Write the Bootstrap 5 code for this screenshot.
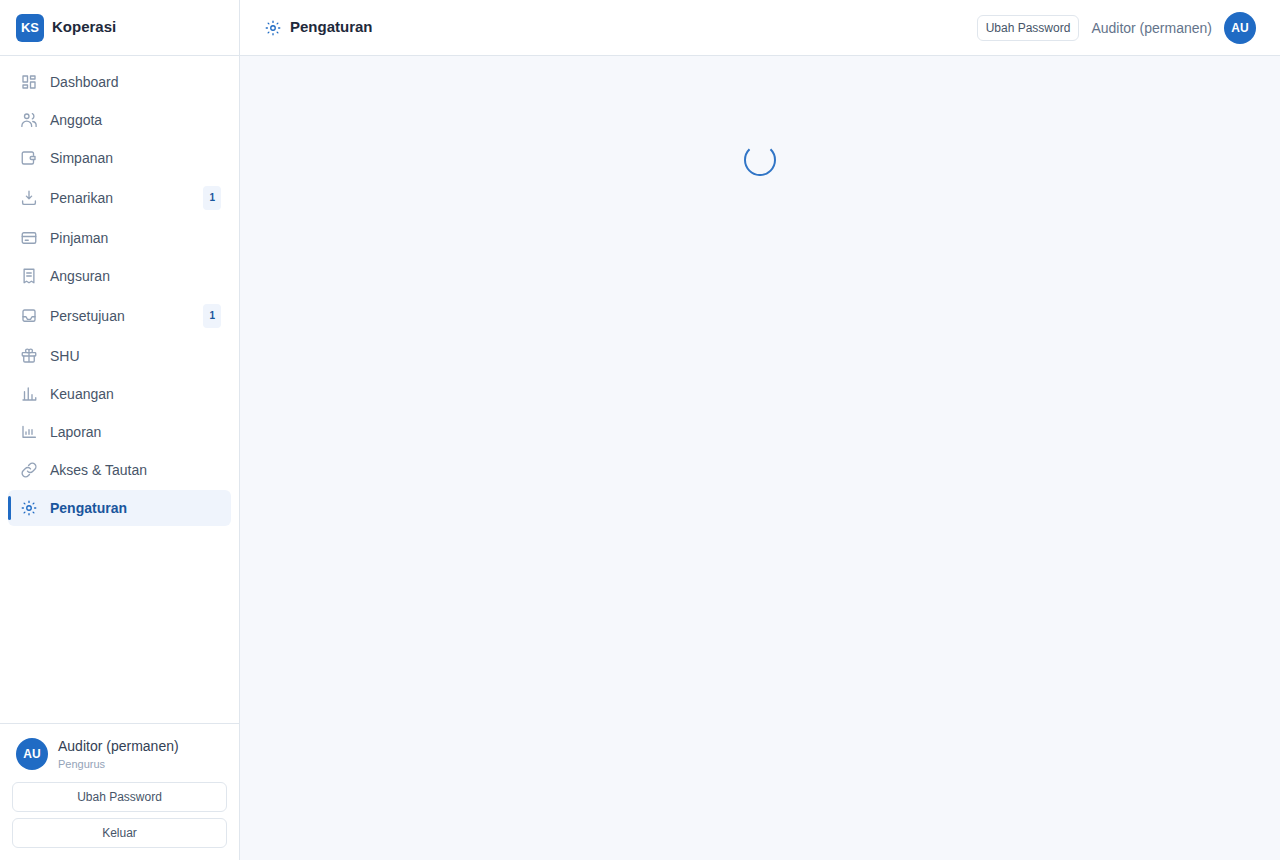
<!DOCTYPE html>
<html lang="id">
<head>
<meta charset="utf-8">
<meta name="viewport" content="width=device-width, initial-scale=1">
<title>Pengaturan - Koperasi</title>
<link href="https://cdn.jsdelivr.net/npm/bootstrap@5.3.0/dist/css/bootstrap.min.css" rel="stylesheet">
<style>
:root { --brand: #206bc4; --brand-dark: #1a569d; --line: #e0e6ed; --tint: #eff4fc; }
body { font-family: "Liberation Sans", Arial, sans-serif; font-size: 14px; line-height: 20px; color: #1f2937; background: #f6f8fc; }
.sidebar { width: 240px; border-right: 1px solid var(--line); }
.topbar, .brand { height: 56px; border-bottom: 1px solid var(--line); }
.brand-title, .page-title { font-size: 15px; line-height: 20px; padding-bottom: 2px; font-weight: 700; color: #1e293b; }
.logo { width: 28px; height: 28px; border-radius: 6px; background: var(--brand); font-size: 13px; }
.avatar { width: 32px; height: 32px; background: var(--brand); font-size: 12px; }
.side-nav { gap: 2px; }
.side-nav .nav-link { gap: 10px; padding: 8px 10px; border-radius: 6px; color: #475569; }
.side-nav .nav-link:hover { background: #f6f8fc; }
.side-nav .nav-link.active { background: var(--tint); color: var(--brand-dark); font-weight: 700; }
.side-nav .nav-link.active::before { content: ""; position: absolute; left: 0; top: 6px; bottom: 6px; width: 3px; border-radius: 2px; background: var(--brand); }
.icon-box { width: 22px; color: #94a3b8; }
.active .icon-box, .page-icon { color: var(--brand); }
svg { width: 18px; height: 18px; fill: none; stroke: currentColor; stroke-width: 1.8; stroke-linecap: round; stroke-linejoin: round; }
.count { padding: 0 6px; border-radius: 4px; font-size: 10px; line-height: 24px; font-weight: 700; background: var(--tint); color: var(--brand-dark); }
.side-foot { border-top: 1px solid var(--line); padding: 12px; gap: 10px; }
.user-text { margin-left: 10px; }
.user-name { color: #334155; }
.user-role { font-size: 11px; line-height: 16px; color: #94a3b8; }
.foot-actions { gap: 6px; }
.top-actions { gap: 12px; }
.btn-line { --bs-btn-font-size: 12px; --bs-btn-line-height: 16px; --bs-btn-padding-y: 6px; --bs-btn-padding-x: 8px; --bs-btn-border-radius: 6px; --bs-btn-color: #475569; --bs-btn-bg: #fff; --bs-btn-border-color: #e0e6ed; --bs-btn-hover-bg: #f6f8fc; --bs-btn-hover-border-color: #cbd5e1; }
.topbar .btn-line { --bs-btn-padding-y: 4px; }
.account { color: #64748b; }
.loading { padding-top: 88px; }
.loading svg { width: 32px; height: 32px; color: #3175c6; }
</style>
</head>
<body>
<svg class="d-none" aria-hidden="true">
  <symbol id="gear" viewBox="0 0 24 24"><circle cx="12" cy="12" r="3"/><path d="M12 3v1.500M12 19.500V21M3 12h1.500M19.500 12H21M5.500 5.500l1 1M17.500 17.500l1 1M18.500 5.500l-1 1M6.500 17.500l-1 1"/></symbol>
</svg>
<div class="d-flex min-vh-100">
  <aside class="sidebar bg-white d-flex flex-column flex-shrink-0">
    <div class="brand d-flex align-items-center gap-2 px-3">
      <span class="logo d-flex align-items-center justify-content-center text-white fw-bold">KS</span>
      <span class="brand-title">Koperasi</span>
    </div>
    <nav class="side-nav nav flex-column flex-nowrap flex-grow-1 p-2" aria-label="Menu utama">
      <a class="nav-link d-flex align-items-center" href="#"><span class="icon-box d-flex justify-content-center"><svg viewBox="0 0 24 24"><path d="M4 4h6v8H4zM14 4h6v4h-6zM4 16h6v4H4zM14 12h6v8h-6z"/></svg></span>Dashboard</a>
      <a class="nav-link d-flex align-items-center" href="#"><span class="icon-box d-flex justify-content-center"><svg viewBox="0 0 24 24"><circle cx="9" cy="7" r="3"/><path d="M2.500 20.500v-.500a6.500 6.500 0 0 1 13 0v.500M16.500 3.500a4 4 0 0 1 0 7M17 14a5.500 5.500 0 0 1 4.500 6v.500"/></svg></span>Anggota</a>
      <a class="nav-link d-flex align-items-center" href="#"><span class="icon-box d-flex justify-content-center"><svg viewBox="0 0 24 24"><path d="M18 8V6a2 2 0 0 0-2-2H5a2 2 0 0 0-2 2v12a2 2 0 0 0 2 2h11a2 2 0 0 0 2-2v-3M20 10h-4.500a2 2 0 0 0 0 4H20z"/></svg></span>Simpanan</a>
      <a class="nav-link d-flex align-items-center" href="#"><span class="icon-box d-flex justify-content-center"><svg viewBox="0 0 24 24"><path d="M12 3v10M8.500 9.500L12 13l3.500-3.500M3.500 16v2.500a2 2 0 0 0 2 2h13a2 2 0 0 0 2-2V16"/></svg></span>Penarikan<span class="count ms-auto">1</span></a>
      <a class="nav-link d-flex align-items-center" href="#"><span class="icon-box d-flex justify-content-center"><svg viewBox="0 0 24 24"><rect x="3" y="5" width="18" height="14" rx="2"/><path d="M3 10h18M7 15h4"/></svg></span>Pinjaman</a>
      <a class="nav-link d-flex align-items-center" href="#"><span class="icon-box d-flex justify-content-center"><svg viewBox="0 0 24 24"><path d="M5.500 3h13v18l-3.250-2L12 21l-3.250-2-3.250 2zM9 8h6M9 12h6"/></svg></span>Angsuran</a>
      <a class="nav-link d-flex align-items-center" href="#"><span class="icon-box d-flex justify-content-center"><svg viewBox="0 0 24 24"><rect x="4" y="4" width="16" height="15" rx="2"/><path d="M4 13h4l2 3.500h4l2-3.500h4"/></svg></span>Persetujuan<span class="count ms-auto">1</span></a>
      <a class="nav-link d-flex align-items-center" href="#"><span class="icon-box d-flex justify-content-center"><svg viewBox="0 0 24 24"><rect x="3" y="7.500" width="18" height="4.500" rx="1"/><path d="M5 12v6.500a1.500 1.500 0 0 0 1.500 1.500h11a1.500 1.500 0 0 0 1.500-1.500V12M12 7.500V20M12 7.500H9.500a2.300 2.300 0 1 1 2.500-2.500zM12 7.500h2.500A2.300 2.300 0 1 0 12 5z"/></svg></span>SHU</a>
      <a class="nav-link d-flex align-items-center" href="#"><span class="icon-box d-flex justify-content-center"><svg viewBox="0 0 24 24"><path d="M4 20h17v-3M6 20V9M11 20V4M16 20v-7"/></svg></span>Keuangan</a>
      <a class="nav-link d-flex align-items-center" href="#"><span class="icon-box d-flex justify-content-center"><svg viewBox="0 0 24 24"><path d="M4 4.500V19h16.500M8 15v-3M12 15V9M16 15V9"/></svg></span>Laporan</a>
      <a class="nav-link d-flex align-items-center" href="#"><span class="icon-box d-flex justify-content-center"><svg viewBox="0 0 24 24"><path d="M10 13.500a4.500 4.500 0 0 0 6.800.500l3-3a4.700 4.700 0 0 0-6.700-6.700l-1.700 1.700M14 10.500a4.500 4.500 0 0 0-6.800-.500l-3 3a4.700 4.700 0 0 0 6.700 6.700l1.700-1.700"/></svg></span>Akses &amp; Tautan</a>
      <a class="nav-link active position-relative d-flex align-items-center" href="#" aria-current="page"><span class="icon-box d-flex justify-content-center"><svg><use href="#gear"/></svg></span>Pengaturan</a>
    </nav>
    <div class="side-foot d-flex flex-column">
      <div class="d-flex align-items-center px-1">
        <span class="avatar rounded-circle d-flex align-items-center justify-content-center text-white fw-bold flex-shrink-0">AU</span>
        <div class="user-text">
          <div class="user-name">Auditor (permanen)</div>
          <div class="user-role">Pengurus</div>
        </div>
      </div>
      <div class="foot-actions d-grid">
        <button type="button" class="btn btn-line">Ubah Password</button>
        <button type="button" class="btn btn-line">Keluar</button>
      </div>
    </div>
  </aside>
  <div class="flex-grow-1 d-flex flex-column">
    <header class="topbar bg-white d-flex align-items-center px-4">
      <span class="page-icon d-flex"><svg><use href="#gear"/></svg></span>
      <h1 class="page-title mb-0 ms-2">Pengaturan</h1>
      <div class="top-actions d-flex align-items-center ms-auto">
        <button type="button" class="btn btn-line">Ubah Password</button>
        <span class="account">Auditor (permanen)</span>
        <span class="avatar rounded-circle d-flex align-items-center justify-content-center text-white fw-bold">AU</span>
      </div>
    </header>
    <main class="loading d-flex justify-content-center" aria-busy="true">
      <svg viewBox="0 0 32 32" role="img" aria-label="Memuat"><path stroke-width="2" stroke-linecap="butt" d="M5.500 5.300A15 15 0 1 0 26.500 5.300"/></svg>
    </main>
  </div>
</div>
<script src="https://cdn.jsdelivr.net/npm/bootstrap@5.3.0/dist/js/bootstrap.bundle.min.js"></script>
</body>
</html>
